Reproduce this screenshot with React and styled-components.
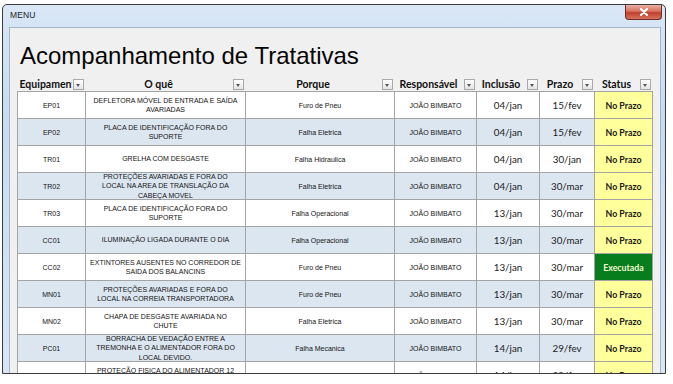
import React from 'react';
import styled, { createGlobalStyle } from 'styled-components';

const GlobalStyle = createGlobalStyle`
  html, body {
    margin: 0;
    padding: 0;
    background: #ffffff;
    font-family: "Liberation Sans", Arial, sans-serif;
  }
`;

const Window = styled.div`
  margin: 4px 0 0 2px;
  width: 664px;
  height: 370px;
  box-sizing: border-box;
  border: 1px solid #3b3b3b;
  border-radius: 5px 5px 0 0;
  background: linear-gradient(180deg, #d9e7f6 0%, #c8dbf0 30%, #d8e6f5 100%);
  padding: 0 4px 0 6px;
  display: flex;
  flex-direction: column;
  overflow: hidden;
`;

const TitleBar = styled.div`
  height: 22px;
  flex: none;
  display: flex;
  justify-content: space-between;
  align-items: flex-start;
  padding-left: 1px;
`;

const Caption = styled.span`
  font-size: 8.5px;
  line-height: 20px;
  color: #1c1c1c;
  letter-spacing: 0.1px;
`;

const CloseButton = styled.div`
  width: 37px;
  height: 15px;
  margin-right: -1px;
  box-sizing: border-box;
  border: 1px solid #6e2a23;
  border-top: none;
  border-radius: 0 0 4px 4px;
  background: linear-gradient(180deg, #eab0a3 0%, #d9705f 45%, #c0402f 55%, #d6735e 100%);
  display: flex;
  align-items: center;
  justify-content: center;
`;

const Client = styled.div`
  flex: 1;
  min-height: 0;
  border: 1px solid #a3b5c9;
  border-bottom: none;
  background: #f0f0f0;
  overflow: hidden;
  display: flex;
  flex-direction: column;
`;

const Heading = styled.h1`
  margin: 13px 0 0 10px;
  font-family: "Liberation Sans", Arial, sans-serif;
  font-weight: normal;
  font-size: 24px;
  line-height: 30px;
  color: #050505;
`;

const Sheet = styled.table`
  margin: 7px 0 0 7px;
  width: 635px;
  border-collapse: collapse;
  table-layout: fixed;
`;

const HeadCell = styled.th`
  height: 13px;
  padding: 0;
  font-family: Lato, "Liberation Sans", sans-serif;
  font-weight: bold;
  font-size: 10.5px;
  line-height: 13px;
  color: #111;
  vertical-align: bottom;
`;

const HeadInner = styled.div`
  display: flex;
  align-items: center;
`;

const HeadLabel = styled.span`
  flex: 1;
  min-width: 0;
  overflow: hidden;
  white-space: nowrap;
  text-align: ${(p) => p.$align || 'center'};
  padding-left: ${(p) => (p.$align === 'left' ? '2px' : '0')};
`;

const Dropdown = styled.span`
  flex: none;
  width: 9px;
  height: 9px;
  margin: 0 2px 0 1px;
  border: 1px solid #a9a9a9;
  background: linear-gradient(180deg, #ffffff, #e4e4e4);
  display: flex;
  align-items: center;
  justify-content: center;

  &::after {
    content: '';
    border-left: 2.5px solid transparent;
    border-right: 2.5px solid transparent;
    border-top: 3px solid #555;
    margin-top: 1px;
  }
`;

const Row = styled.tr`
  background: ${(p) => (p.$striped ? '#dce6f1' : '#ffffff')};
`;

const Cell = styled.td`
  padding: 0;
  border: 1px solid #a4a4a4;
  background: ${(p) => p.$bg || 'transparent'};
`;

const CellBox = styled.div`
  height: 26px;
  padding: 0 2px;
  display: flex;
  align-items: center;
  justify-content: center;
  text-align: center;
`;

const SmallText = styled.span`
  font-family: "Liberation Sans", Arial, sans-serif;
  font-size: 7px;
  line-height: ${(p) => (p.$tight ? '9.5px' : '9px')};
  color: #141414;
  white-space: pre;
`;

const DateText = styled.span`
  font-family: Lato, "Liberation Sans", sans-serif;
  font-size: 9.8px;
  color: #1a1a1a;
`;

const StatusText = styled.span`
  font-family: Lato, "Liberation Sans", sans-serif;
  font-weight: bold;
  font-size: 8.8px;
  color: ${(p) => p.$color};
`;

const columns = [
  { label: 'Equipamento', width: 68, align: 'left' },
  { label: 'O quê', width: 160 },
  { label: 'Porque', width: 149 },
  { label: 'Responsável', width: 82 },
  { label: 'Inclusão', width: 63 },
  { label: 'Prazo', width: 55 },
  { label: 'Status', width: 58 },
];

const rows = [
  ['EP01', 'DEFLETORA MÓVEL DE ENTRADA E SAÍDA\nAVARIADAS', 'Furo de Pneu', '04/jan', '15/fev', 'No Prazo'],
  ['EP02', 'PLACA DE IDENTIFICAÇÃO FORA DO\nSUPORTE', 'Falha Eletrica', '04/jan', '15/fev', 'No Prazo'],
  ['TR01', 'GRELHA COM DESGASTE', 'Falha Hidraulica', '04/jan', '30/jan', 'No Prazo'],
  ['TR02', 'PROTEÇÕES AVARIADAS E FORA DO\nLOCAL NA AREA DE TRANSLAÇÃO DA\nCABEÇA MOVEL', 'Falha Eletrica', '04/jan', '30/mar', 'No Prazo'],
  ['TR03', 'PLACA DE IDENTIFICAÇÃO FORA DO\nSUPORTE', 'Falha Operacional', '13/jan', '30/mar', 'No Prazo'],
  ['CC01', 'ILUMINAÇÃO LIGADA DURANTE O DIA', 'Falha Operacional', '13/jan', '30/mar', 'No Prazo'],
  ['CC02', 'EXTINTORES AUSENTES NO CORREDOR DE\nSAIDA DOS BALANCINS', 'Furo de Pneu', '13/jan', '30/mar', 'Executada'],
  ['MN01', 'PROTEÇÕES AVARIADAS E FORA DO\nLOCAL NA CORREIA TRANSPORTADORA', 'Furo de Pneu', '13/jan', '30/mar', 'No Prazo'],
  ['MN02', 'CHAPA DE DESGASTE AVARIADA NO\nCHUTE', 'Falha Eletrica', '13/jan', '30/mar', 'No Prazo'],
  ['PC01', 'BORRACHA DE VEDAÇÃO ENTRE A\nTREMONHA E O ALIMENTADOR FORA DO\nLOCAL DEVIDO.', 'Falha Mecanica', '14/jan', '29/fev', 'No Prazo'],
  ['PC01', 'PROTEÇÃO FISICA DO ALIMENTADOR 12\nPARA AVARIADA', 'Falha Operacional', '14/jan', '29/fev', 'No Prazo'],
];

const statusStyle = {
  'No Prazo': { bg: '#ffff9c', color: '#1a1a1a' },
  Executada: { bg: '#087d1e', color: '#f2f7cf' },
};

function CloseIcon() {
  return (
    <svg width="10" height="8" viewBox="0 0 10 8">
      <path d="M2 1 L8 7 M8 1 L2 7" stroke="#ffffff" strokeWidth="2" strokeLinecap="round" />
    </svg>
  );
}

export default function App() {
  return (
    <>
      <GlobalStyle />
      <Window>
        <TitleBar>
          <Caption>MENU</Caption>
          <CloseButton><CloseIcon /></CloseButton>
        </TitleBar>
        <Client>
          <Heading>Acompanhamento de Tratativas</Heading>
          <Sheet>
            <colgroup>
              {columns.map((c) => <col key={c.label} style={{ width: c.width }} />)}
            </colgroup>
            <thead>
              <tr>
                {columns.map((c) => (
                  <HeadCell key={c.label}>
                    <HeadInner>
                      <HeadLabel $align={c.align}>{c.label}</HeadLabel>
                      <Dropdown />
                    </HeadInner>
                  </HeadCell>
                ))}
              </tr>
            </thead>
            <tbody>
              {rows.map((r, i) => {
                const st = statusStyle[r[5]];
                return (
                  <Row key={i} $striped={i % 2 === 1}>
                    <Cell><CellBox><SmallText>{r[0]}</SmallText></CellBox></Cell>
                    <Cell><CellBox><SmallText $tight>{r[1]}</SmallText></CellBox></Cell>
                    <Cell><CellBox><SmallText>{r[2]}</SmallText></CellBox></Cell>
                    <Cell><CellBox><SmallText>JOÃO BIMBATO</SmallText></CellBox></Cell>
                    <Cell><CellBox><DateText>{r[3]}</DateText></CellBox></Cell>
                    <Cell><CellBox><DateText>{r[4]}</DateText></CellBox></Cell>
                    <Cell $bg={st.bg}><CellBox><StatusText $color={st.color}>{r[5]}</StatusText></CellBox></Cell>
                  </Row>
                );
              })}
            </tbody>
          </Sheet>
        </Client>
      </Window>
    </>
  );
}
